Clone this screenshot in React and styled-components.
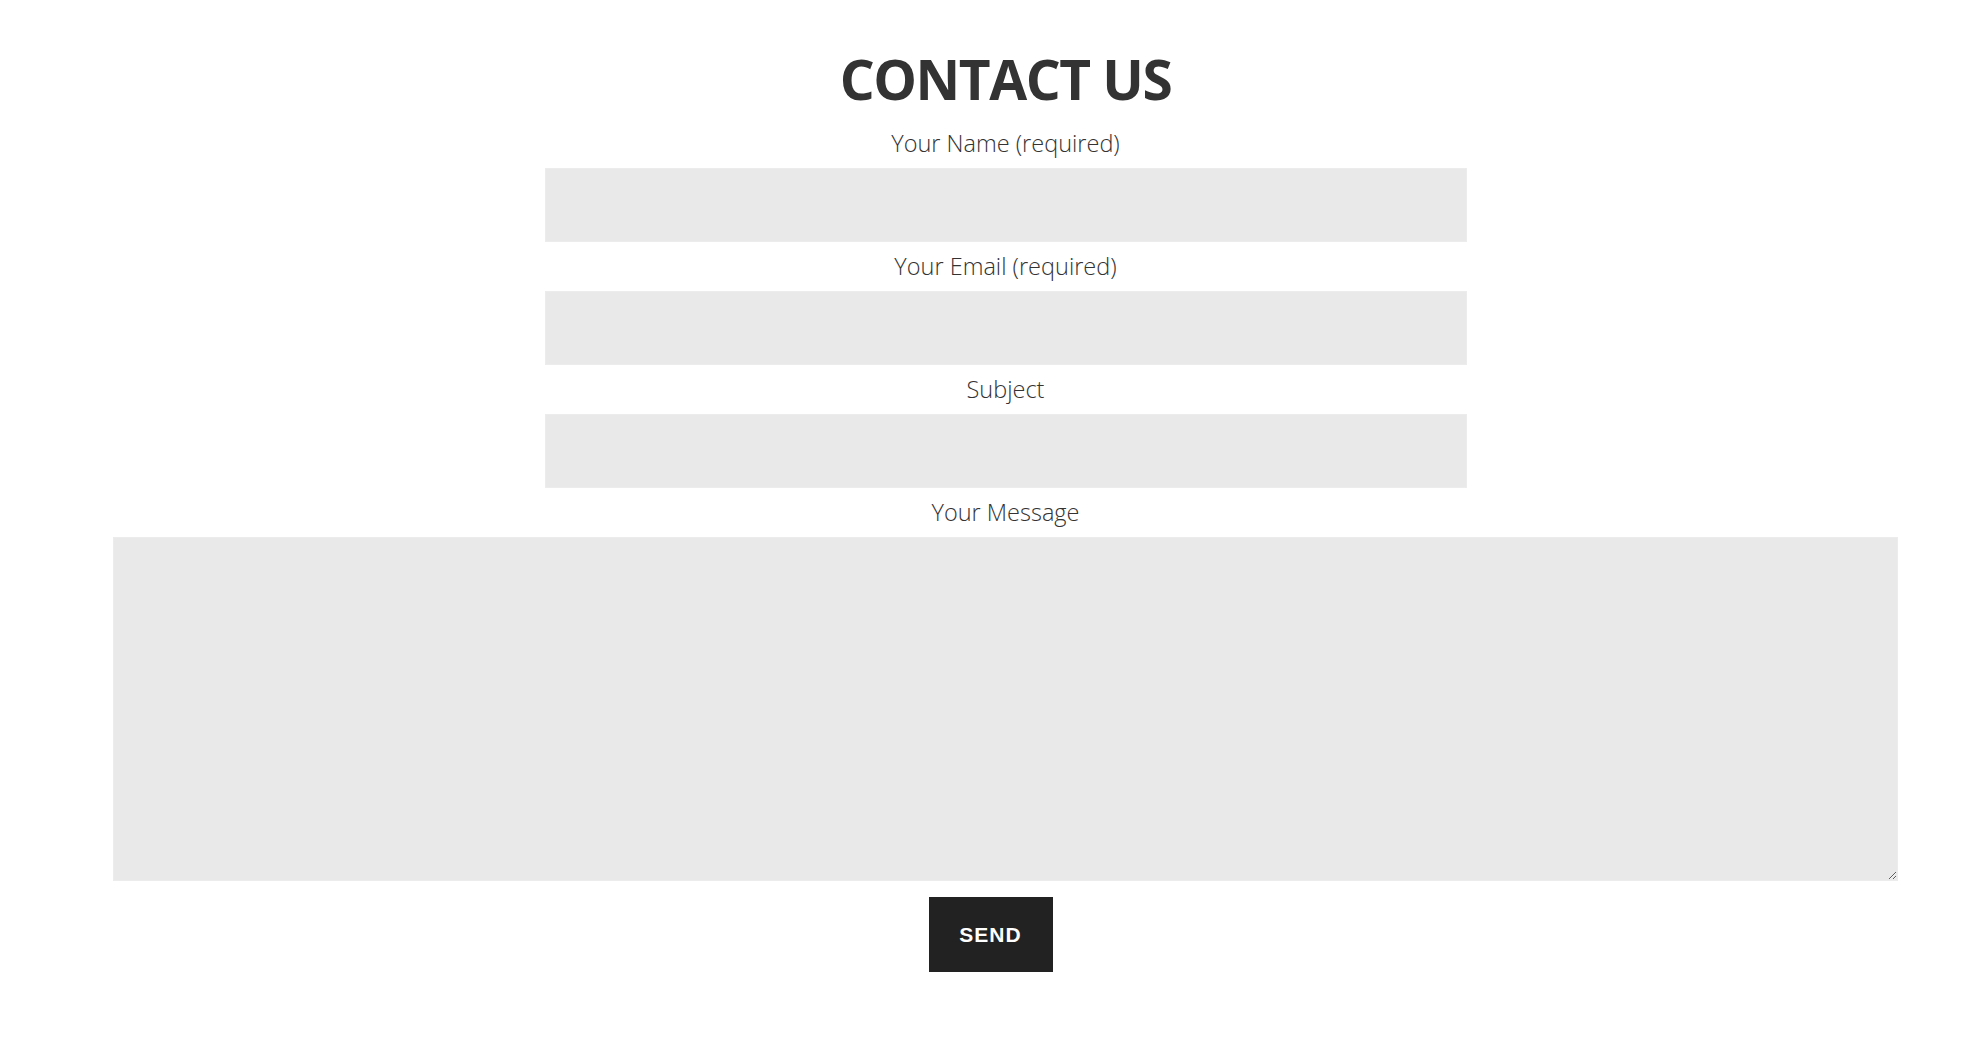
import React from "react";
import styled, { createGlobalStyle } from "styled-components";

const GlobalStyle = createGlobalStyle`
  html, body {
    margin: 0;
    padding: 0;
    background: #ffffff;
  }
  body {
    font-family: "Open Sans", "Noto Sans", sans-serif;
    color: #333333;
  }
  * { box-sizing: border-box; }
`;

const Page = styled.main`
  padding: 0 80px 60px 113px;
`;

const Form = styled.form`
  display: flex;
  flex-direction: column;
  align-items: center;
`;

const Title = styled.h1`
  margin: 39px 0 0;
  font-family: "Open Sans", "Noto Sans", sans-serif;
  font-weight: 700;
  font-size: 55px;
  line-height: 80px;
  color: #333333;
  letter-spacing: -1.5px;
`;

const Label = styled.label`
  display: block;
  font-family: "Open Sans", "Noto Sans", sans-serif;
  font-weight: 300;
  font-size: 23.5px;
  line-height: 49px;
  color: #333333;
  text-align: center;
`;

const Field = styled.input`
  display: block;
  width: 922px;
  height: 74px;
  margin: 0;
  padding: 0 16px;
  background: #e9e9e9;
  border: 1px solid #ececec;
  border-radius: 0;
  outline: none;
  font: inherit;
`;

const Message = styled.textarea`
  display: block;
  width: 100%;
  height: 344px;
  margin: 0;
  padding: 16px;
  background: #e9e9e9;
  border: 1px solid #ececec;
  border-radius: 0;
  outline: none;
  resize: both;
  font: inherit;
`;

const Send = styled.button`
  margin: 16px 30px 0 0;
  width: 124px;
  height: 75px;
  background: #222222;
  color: #ffffff;
  border: none;
  border-radius: 0;
  font-family: "Liberation Sans", Arial, sans-serif;
  font-weight: 700;
  font-size: 21px;
  letter-spacing: 1px;
  text-transform: uppercase;
  cursor: pointer;
`;

export default function App() {
  return (
    <>
      <GlobalStyle />
      <Page>
        <Form onSubmit={(e) => e.preventDefault()}>
          <Title>CONTACT US</Title>
          <Label htmlFor="name">Your Name (required)</Label>
          <Field id="name" type="text" />
          <Label htmlFor="email">Your Email (required)</Label>
          <Field id="email" type="email" />
          <Label htmlFor="subject">Subject</Label>
          <Field id="subject" type="text" />
          <Label htmlFor="message">Your Message</Label>
          <Message id="message" />
          <Send type="submit">Send</Send>
        </Form>
      </Page>
    </>
  );
}
